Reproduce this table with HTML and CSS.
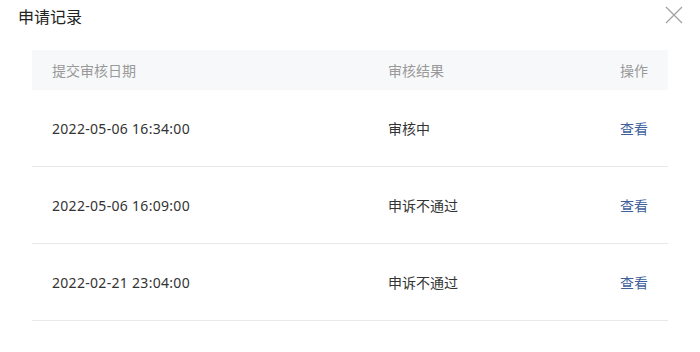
FILE: index.html
```html
<!DOCTYPE html>
<html lang="zh">
<head>
<meta charset="utf-8">
<title>申请记录</title>
<link rel="stylesheet" href="styles.css">
</head>
<body>
<div class="dialog">
  <div class="dialog-header">
    <h2 class="title">申请记录</h2>
    <button class="close" aria-label="关闭">
      <svg width="18" height="18" viewBox="0 0 18 18"><path d="M1 1 L17 17 M17 1 L1 17" stroke="#a0a0a0" stroke-width="1.2" fill="none"/></svg>
    </button>
  </div>
  <table class="records">
    <thead>
      <tr><th class="c-date">提交审核日期</th><th class="c-status">审核结果</th><th class="c-op">操作</th></tr>
    </thead>
    <tbody>
      <tr><td class="c-date">2022-05-06 16:34:00</td><td class="c-status">审核中</td><td class="c-op"><a href="#">查看</a></td></tr>
      <tr><td class="c-date">2022-05-06 16:09:00</td><td class="c-status">申诉不通过</td><td class="c-op"><a href="#">查看</a></td></tr>
      <tr><td class="c-date">2022-02-21 23:04:00</td><td class="c-status">申诉不通过</td><td class="c-op"><a href="#">查看</a></td></tr>
    </tbody>
  </table>
</div>
</body>
</html>
```
FILE: styles.css
```css
html, body {
  margin: 0;
  padding: 0;
  background: #fff;
}
body {
  font-family: "Noto Sans", "Noto Sans CJK SC", sans-serif;
  color: #333;
}
.dialog {
  width: 700px;
  height: 352px;
  box-sizing: border-box;
  padding: 0 32px;
}
.dialog-header {
  display: flex;
  justify-content: space-between;
  align-items: flex-start;
  height: 50px;
  margin: 0 -32px;
  padding: 0 17px 0 18px;
}
.title {
  margin: 6px 0 0;
  font-size: 16px;
  font-weight: normal;
  line-height: 22px;
  color: #222;
}
.close {
  border: 0;
  background: none;
  padding: 0;
  margin-top: 6px;
  width: 18px;
  height: 18px;
  cursor: pointer;
}
.close svg { display: block; }
.records {
  width: 636px;
  border-collapse: collapse;
  font-size: 14px;
}
.records th {
  background: #f7f8fa;
  color: #999;
  font-weight: normal;
  height: 40px;
  padding: 0 20px;
  text-align: left;
}
.records td {
  height: 76px;
  padding: 0 20px;
  border-bottom: 1px solid #e8e8e8;
  color: #333;
}
.records .c-date { width: 296px; }
.records td.c-date { letter-spacing: 0.3px; }
.records .c-op { text-align: right; width: 40px; }
.records a {
  color: #3e5f9c;
  text-decoration: none;
}
```
